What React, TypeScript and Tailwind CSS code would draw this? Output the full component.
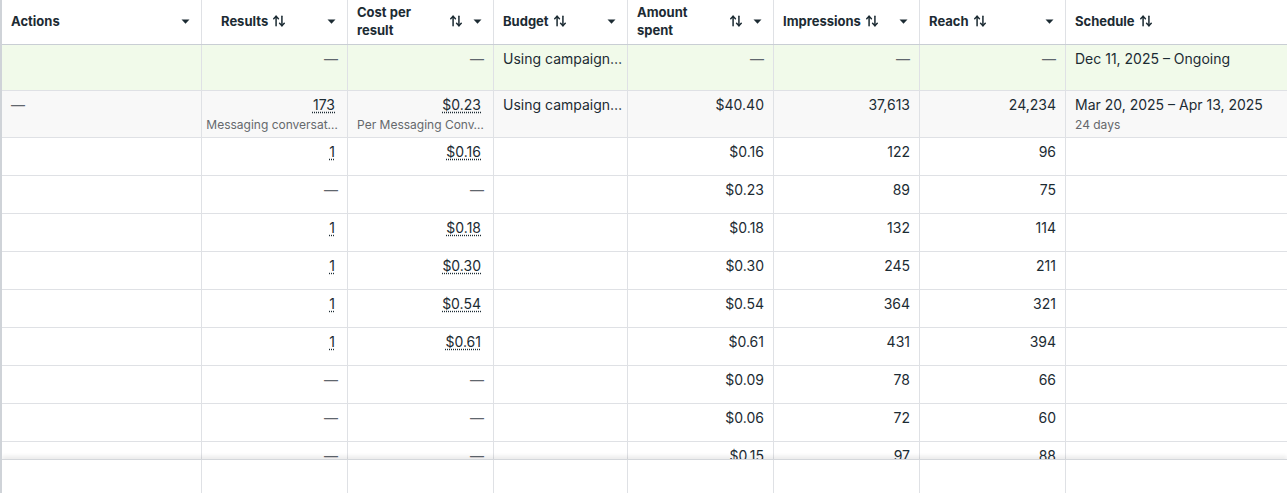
import { ReactNode } from "react"

const GRID =
  "grid grid-cols-[200px_146px_146px_134px_146px_146px_146px_1fr] border-b border-[#dfe1e5]"

const SortIcon = () => (
  <svg width="14" height="14" viewBox="0 0 24 24" fill="none" stroke="#1c2b33" strokeWidth="2.6" strokeLinecap="round" strokeLinejoin="round" className="shrink-0">
    <path d="M3 8l4-4 4 4" />
    <path d="M7 4v16" />
    <path d="M21 16l-4 4-4-4" />
    <path d="M17 20V4" />
  </svg>
)

const Caret = () => (
  <svg width="9" height="5" viewBox="0 0 9 5" className="shrink-0">
    <path d="M0.5 0.5h8L4.5 4.8z" fill="#1c2b33" />
  </svg>
)

type Head = { label: ReactNode; sortInline?: boolean; sortRight?: boolean; pl?: string }

const heads: Head[] = [
  { label: "Actions" },
  { label: "Results", sortInline: true, pl: "pl-[19px]" },
  { label: <>Cost per<br />result</>, sortRight: true },
  { label: "Budget", sortInline: true },
  { label: <>Amount<br />spent</>, sortRight: true },
  { label: "Impressions", sortInline: true },
  { label: "Reach", sortInline: true },
  { label: "Schedule", sortInline: true },
]

type Row = { results: string; cost: string; amount: string; imp: string; reach: string }

const rows: Row[] = [
  { results: "1", cost: "$0.16", amount: "$0.16", imp: "122", reach: "96" },
  { results: "—", cost: "—", amount: "$0.23", imp: "89", reach: "75" },
  { results: "1", cost: "$0.18", amount: "$0.18", imp: "132", reach: "114" },
  { results: "1", cost: "$0.30", amount: "$0.30", imp: "245", reach: "211" },
  { results: "1", cost: "$0.54", amount: "$0.54", imp: "364", reach: "321" },
  { results: "1", cost: "$0.61", amount: "$0.61", imp: "431", reach: "394" },
  { results: "—", cost: "—", amount: "$0.09", imp: "78", reach: "66" },
  { results: "—", cost: "—", amount: "$0.06", imp: "72", reach: "60" },
  { results: "—", cost: "—", amount: "$0.15", imp: "97", reach: "88" },
]

const Dash = () => <span className="text-[#5f666d]">—</span>

const Val = ({ v }: { v: string }) =>
  v === "—" ? (
    <Dash />
  ) : (
    <span className="mr-[3px] underline decoration-dotted decoration-[#1c2b33] underline-offset-[2px]">{v}</span>
  )

const Cell = ({ children, right, last }: { children?: ReactNode; right?: boolean; last?: boolean }) => (
  <div
    className={`${last ? "" : "border-r"} border-[#dfe1e5] pt-[5px] leading-[18px] overflow-hidden whitespace-nowrap ${
      right ? "pr-[9px] text-right" : "pl-[9px]"
    }`}
  >
    {children}
  </div>
)

const Sub = ({ children }: { children: ReactNode }) => (
  <div className="mt-[3px] text-[12px] leading-[16px] text-[#65686c] truncate">{children}</div>
)

export default function App() {
  return (
    <div
      className="h-[493px] w-[1287px] overflow-hidden bg-white border-l-2 border-[#cfd3d8] text-[14px] text-[#1c2b33]"
      style={{ fontFamily: "Inter, 'Noto Sans', sans-serif" }}
    >
      <div className="h-[459px] overflow-hidden">
        {/* header */}
        <div className="grid h-[45px] grid-cols-[200px_146px_146px_134px_146px_146px_146px_1fr] border-b border-[#c9ced4]">
          {heads.map((h, i) => (
            <div
              key={i}
              className={`flex items-center justify-between pb-[2px] ${i < 7 ? "border-r border-[#dfe1e5]" : ""} ${h.pl ?? "pl-[9px]"} pr-[11px] text-[13px] font-bold leading-[18px]`}
            >
              <div className="flex items-center gap-[4px]">
                <span>{h.label}</span>
                {h.sortInline && <SortIcon />}
              </div>
              <div className="flex items-center gap-[10px]">
                {h.sortRight && <SortIcon />}
                {i < 7 && <Caret />}
              </div>
            </div>
          ))}
        </div>

        {/* campaign row */}
        <div className={`${GRID} h-[46px] bg-[#f1faea]`}>
          <Cell />
          <Cell right><Dash /></Cell>
          <Cell right><Dash /></Cell>
          <Cell>Using campaign…</Cell>
          <Cell right><Dash /></Cell>
          <Cell right><Dash /></Cell>
          <Cell right><Dash /></Cell>
          <Cell last>Dec 11, 2025 – Ongoing</Cell>
        </div>

        {/* summary row */}
        <div className={`${GRID} h-[47px] bg-[#f8f8f8]`}>
          <Cell><Dash /></Cell>
          <Cell right>
            <Val v="173" />
            <Sub>Messaging conversat…</Sub>
          </Cell>
          <Cell right>
            <Val v="$0.23" />
            <Sub>Per Messaging Conv…</Sub>
          </Cell>
          <Cell>Using campaign…</Cell>
          <Cell right>$40.40</Cell>
          <Cell right>37,613</Cell>
          <Cell right>24,234</Cell>
          <Cell last>
            Mar 20, 2025 – Apr 13, 2025
            <Sub>24 days</Sub>
          </Cell>
        </div>

        {rows.map((r, i) => (
          <div key={i} className={`${GRID} h-[38px]`}>
            <Cell />
            <Cell right><Val v={r.results} /></Cell>
            <Cell right><Val v={r.cost} /></Cell>
            <Cell />
            <Cell right>{r.amount}</Cell>
            <Cell right>{r.imp}</Cell>
            <Cell right>{r.reach}</Cell>
            <Cell last />
          </div>
        ))}
      </div>

      {/* sticky footer */}
      <div className="relative grid h-[34px] grid-cols-[200px_146px_146px_134px_146px_146px_146px_1fr] border-t border-[#d4d7db] bg-white shadow-[0_-3px_4px_rgba(0,0,0,0.08)]">
        {Array.from({ length: 8 }).map((_, i) => (
          <div key={i} className={i < 7 ? "border-r border-[#dfe1e5]" : ""} />
        ))}
      </div>
    </div>
  )
}
